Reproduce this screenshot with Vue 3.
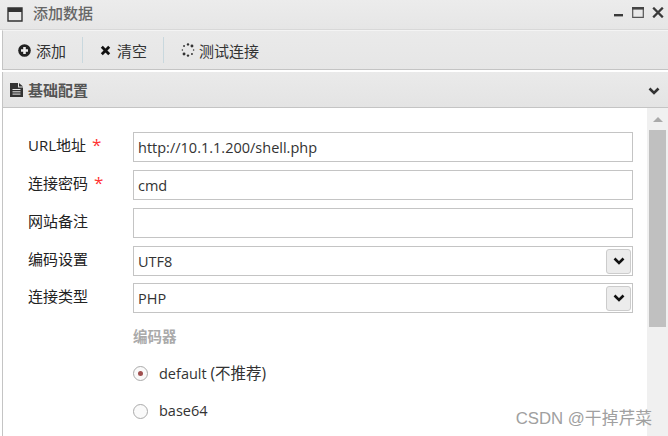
<template>
  <div class="win">
    <header class="titlebar">
      <svg class="win-icon" width="16" height="16" viewBox="0 0 16 16">
        <path d="M1 2h14v13H1z" fill="none" stroke="#333" stroke-width="1.4" />
        <path d="M1 2h14v4H1z" fill="#333" />
      </svg>
      <span class="title">添加数据</span>
      <div class="win-btns">
        <svg class="btn-min" width="10" height="10" viewBox="0 0 10 10"><path d="M0 7h9v2.400H0z" fill="#3a3a3a" /></svg>
        <svg width="12" height="11" viewBox="0 0 12 11"><path d="M.7.7h10.600v9.600H.7z" fill="none" stroke="#555" stroke-width="1.200" /><path d="M0 0h12v2.600H0z" fill="#444" /></svg>
        <svg width="12" height="11" viewBox="0 0 12 11"><path d="M1.200 .7l9.600 9.600M10.800 .7l-9.600 9.600" stroke="#3a3a3a" stroke-width="2.300" /></svg>
      </div>
    </header>

    <div class="toolbar">
      <button class="tool tool-add">
        <svg width="13" height="13" viewBox="0 0 13 13">
          <circle cx="6.500" cy="6.500" r="6.300" fill="#222" />
          <path d="M5.200 3h2.600v2.200H10v2.600H7.800V10H5.200V7.800H3V5.200h2.200z" fill="#eee" />
        </svg>
        添加
      </button>
      <i class="sep"></i>
      <button class="tool">
        <svg width="11" height="11" viewBox="0 0 11 11"><path d="M1.800 1.800l7.400 7.400M9.200 1.800L1.800 9.200" stroke="#111" stroke-width="2.800" /></svg>
        清空
      </button>
      <i class="sep"></i>
      <button class="tool tool-spin">
        <svg width="14" height="14" viewBox="0 0 15 15">
          <circle v-for="d in spinner" :key="d.x" :cx="d.x" :cy="d.y" :r="d.r" fill="#333" />
        </svg>
        测试连接
      </button>
    </div>

    <div class="section">
      <svg width="13" height="15" viewBox="0 0 13 15">
        <path d="M0 1h8v4.500h5V15H0z" fill="#333" />
        <path d="M9 1l4 3.500H9z" fill="#333" />
        <path d="M2.500 7.500h8M2.500 9.800h8M2.500 12.100h8" stroke="#e8e8e8" stroke-width="1" />
      </svg>
      <span class="section-name">基础配置</span>
      <svg class="caret" width="12" height="9" viewBox="0 0 12 9"><path d="M1.500 1.500L6 6l4.500-4.500" fill="none" stroke="#333" stroke-width="2.600" /></svg>
    </div>

    <div class="body">
      <form class="form">
        <div v-for="f in fields" :key="f.label" class="row">
          <label class="label">{{ f.label }}<em v-if="f.required" class="req">*</em></label>
          <div class="box">
            <span>{{ f.value }}</span>
            <b v-if="f.select" class="drop">
              <svg width="12" height="9" viewBox="0 0 12 9"><path d="M1.500 1.500L6 6l4.500-4.500" fill="none" stroke="#111" stroke-width="2.600" /></svg>
            </b>
          </div>
        </div>
        <div class="encoder">
          <div class="enc-title">编码器</div>
          <div class="radio"><i class="dot on"></i><span>default <span class="cjk">(不推荐)</span></span></div>
          <div class="radio"><i class="dot"></i>base64</div>
        </div>
      </form>
      <div class="scroll">
        <i class="arrow"></i>
        <div class="thumb"></div>
      </div>
    </div>
    <div class="watermark">CSDN @干掉芹菜</div>
  </div>
</template>

<script setup>
const fields = [
  { label: 'URL地址', value: 'http://10.1.1.200/shell.php', required: true },
  { label: '连接密码', value: 'cmd', required: true },
  { label: '网站备注', value: '' },
  { label: '编码设置', value: 'UTF8', select: true },
  { label: '连接类型', value: 'PHP', select: true },
]

// ring of dots, growing around the circle
const spinner = Array.from({ length: 8 }, (_, i) => {
  const a = (i / 8) * Math.PI * 2
  return { x: 7.5 + Math.cos(a) * 6, y: 7.5 + Math.sin(a) * 6, r: 0.8 + (i % 4) * 0.25 }
})
</script>

<style>
html,
body {
  margin: 0;
  background: #fff;
}
</style>

<style scoped>
.win {
  position: relative;
  width: 668px;
  height: 436px;
  overflow: hidden;
  display: flex;
  flex-direction: column;
  font-family: "Open Sans", "Noto Sans CJK SC", sans-serif;
  font-size: 14.5px;
  color: #333;
}
.titlebar {
  height: 30px;
  box-sizing: border-box;
  flex: none;
  display: flex;
  align-items: center;
  padding: 0 4px 1px 7px;
  background: linear-gradient(#ececec, #e6e6e6);
  border-bottom: 1px solid #d8d8d8;
}
.win-icon {
  margin-right: 10px;
}
.title {
  color: #666;
  font-size: 15px;
  font-weight: 500;
  margin-bottom: 4px;
}
.win-btns {
  margin-left: auto;
  display: flex;
  align-items: center;
  gap: 8px;
  margin-bottom: 4px;
}
.toolbar {
  height: 40px;
  box-sizing: border-box;
  flex: none;
  display: flex;
  align-items: center;
  margin-left: 2px;
  padding-left: 15px;
  background: linear-gradient(#eaeaea, #e6e6e6);
  border-top: 1px solid #f4f4f4;
  border-bottom: 1px solid #c4c4c4;
  border-left: 1px solid #c4c4c4;
}
.tool {
  display: flex;
  align-items: center;
  gap: 6px;
  padding: 0;
  border: 0;
  background: none;
  font: inherit;
  font-size: 15px;
  color: #333;
}
.tool-add {
  gap: 5px;
}
.tool-spin {
  gap: 4px;
}
.sep {
  width: 1px;
  height: 26px;
  margin: 0 17px 0 16px;
  background: #c9d8de;
}
.section {
  height: 36px;
  box-sizing: border-box;
  flex: none;
  margin: 2px 0 0 2px;
  display: flex;
  align-items: center;
  gap: 5px;
  padding: 0 8px 0 7px;
  background: linear-gradient(#eaeaea, #e4e4e4);
  border-bottom: 1px solid #c4c4c4;
  border-left: 1px solid #c4c4c4;
}
.section-name {
  font-size: 15px;
  font-weight: 700;
  color: #555;
}
.caret {
  margin-left: auto;
  margin-top: 3px;
}
.body {
  flex: 1;
  display: flex;
  margin-left: 2px;
  border-left: 1px solid #c4c4c4;
  min-height: 0;
}
.form {
  flex: 1;
  padding: 24px 14px 0 25px;
  display: flex;
  flex-direction: column;
  gap: 8px;
}
.row {
  display: flex;
  align-items: center;
}
.row:nth-child(5) {
  margin-top: -1px;
}
.label {
  width: 105px;
  flex: none;
  color: #222;
  font-size: 15px;
  line-height: 26px;
  margin-bottom: 4px;
}
.req {
  margin-left: 6px;
  color: #f33;
  font-size: 17px;
  font-style: normal;
}
.box {
  flex: 1;
  height: 30px;
  box-sizing: border-box;
  display: flex;
  align-items: center;
  justify-content: space-between;
  padding: 0 1px 0 4px;
  border: 1px solid #c4c4c4;
}
.drop {
  width: 25px;
  height: 25px;
  display: flex;
  align-items: center;
  justify-content: center;
  background: #ececec;
  border: 1px solid #ccc;
  border-radius: 3px;
  box-sizing: border-box;
}
.encoder {
  padding-left: 105px;
  margin-top: 5px;
}
.enc-title {
  color: #aaa;
  font-weight: 700;
  line-height: 21px;
}
.radio {
  display: flex;
  align-items: center;
  gap: 11px;
  margin-top: 14px;
  height: 24px;
  line-height: 24px;
}
.cjk {
  font-size: 15.5px;
}
.dot {
  width: 15px;
  height: 15px;
  box-sizing: border-box;
  border: 1px solid #aaa;
  border-radius: 50%;
  background: #fafafa;
  display: flex;
  align-items: center;
  justify-content: center;
}
.dot.on::after {
  content: "";
  width: 5px;
  height: 5px;
  border-radius: 50%;
  background: #a05050;
}
.scroll {
  width: 21px;
  flex: none;
  background: #f0f0f0;
  padding: 0 2px;
  box-sizing: border-box;
}
.arrow {
  display: block;
  width: 0;
  margin: 9px auto 8px;
  border: 5px solid transparent;
  border-top: 0;
  border-bottom: 5px solid #aaa;
}
.thumb {
  height: 197px;
  background: #c0c0c0;
}
.watermark {
  position: absolute;
  right: 16px;
  bottom: 7px;
  color: #a0a0a0;
  font-family: "Liberation Sans", "Noto Sans CJK SC", sans-serif;
  font-size: 16.8px;
}
</style>
